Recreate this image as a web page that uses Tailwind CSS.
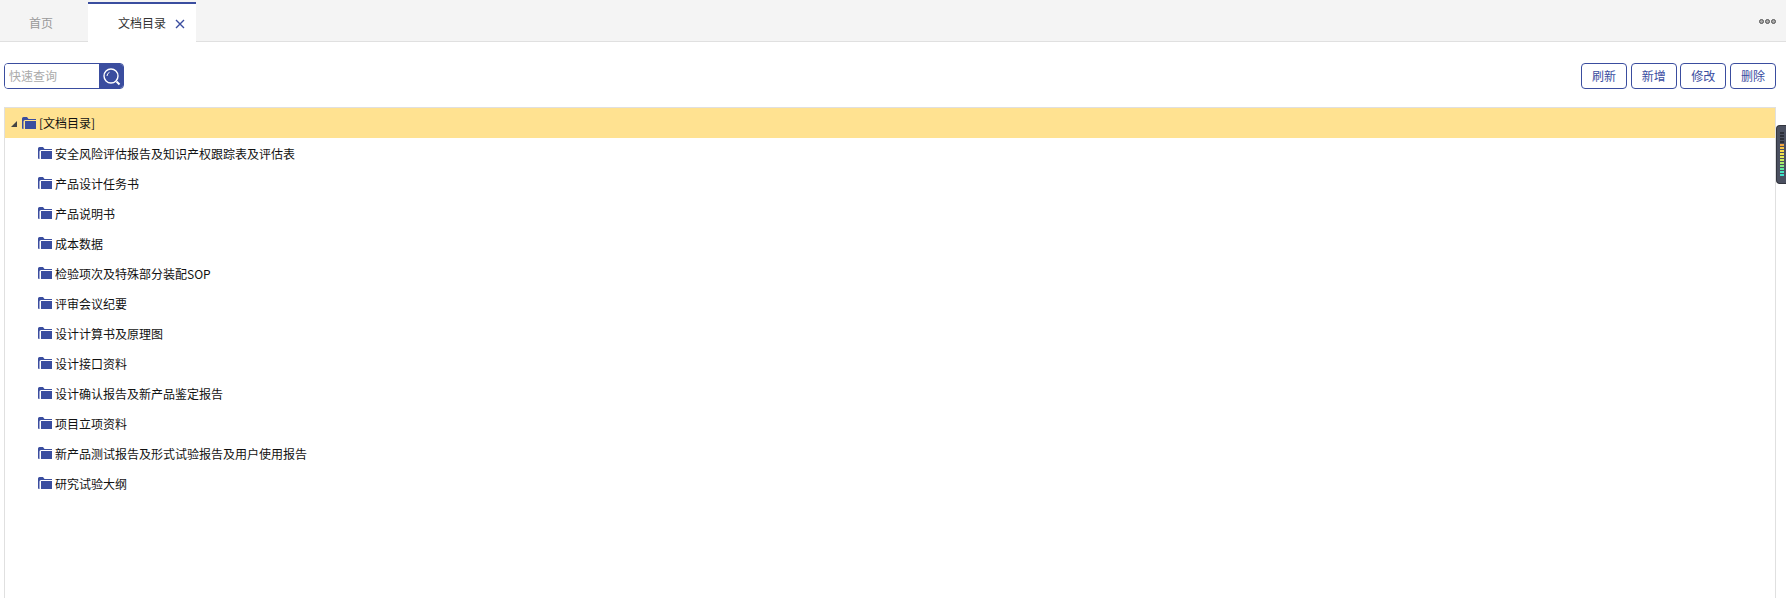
<!DOCTYPE html>
<html lang="zh-CN">
  <head>
    <meta charset="UTF-8" />
    <meta name="viewport" content="width=device-width, initial-scale=1.0" />
    <script src="https://cdn.jsdelivr.net/npm/@tailwindcss/browser@4"></script>
    <title>文档目录</title>
  </head>
  <body class="relative h-[598px] overflow-hidden bg-white font-['Noto_Sans_CJK_SC','Liberation_Sans',sans-serif] text-xs text-[#111]">
    <!-- tabs -->
    <div class="flex h-[42px] items-stretch justify-between border-b border-[#e0e0e0] bg-[#f4f4f4]">
      <div class="flex">
        <div class="flex w-[88px] items-center pl-[29px] pt-[4px] text-[#999]">首页</div>
        <div class="-mb-px mt-[2px] flex w-[108px] items-center border-t-2 border-[#3a4d9f] bg-white pl-[30px] text-[#333]">
          文档目录
          <svg class="ml-[9px] mt-[2px]" width="10" height="10" viewBox="0 0 10 10" fill="none" stroke="#3a4d9f" stroke-width="1.4"><path d="M1 1l8 8M9 1l-8 8" /></svg>
        </div>
      </div>
      <div class="flex items-center gap-[1px] pr-[10px] pt-[1px]">
        <span class="size-[5px] rounded-full border border-[#555] bg-[#aaa]"></span>
        <span class="size-[5px] rounded-full border border-[#555] bg-[#aaa]"></span>
        <span class="size-[5px] rounded-full border border-[#555] bg-[#aaa]"></span>
      </div>
    </div>

    <!-- toolbar -->
    <div class="flex items-center justify-between pl-[4px] pr-[10px] pt-[21px]">
      <div class="flex h-[26px] w-[120px] overflow-hidden rounded border border-[#3a4d9f]">
        <input class="w-[94px] bg-white px-[4px] text-xs outline-none placeholder:text-[#aaa]" placeholder="快速查询" />
        <div class="flex flex-1 items-center justify-center bg-[#3a4d9f]">
          <svg width="19" height="19" viewBox="0 0 19 19" fill="none" stroke="#fff"><circle cx="9" cy="9" r="7" stroke-width="1.4" /><path d="M14.500 14.500l3 3" stroke-width="2" /><path d="M5 9a4 4 0 0 1 2.500-3.700" stroke-width="1" /></svg>
        </div>
      </div>
      <div class="flex gap-[3.67px]">
        <button class="h-[26px] w-[46px] rounded border border-[#3a4d9f] text-xs text-[#3a4d9f]">刷新</button>
        <button class="h-[26px] w-[46px] rounded border border-[#3a4d9f] text-xs text-[#3a4d9f]">新增</button>
        <button class="h-[26px] w-[46px] rounded border border-[#3a4d9f] text-xs text-[#3a4d9f]">修改</button>
        <button class="h-[26px] w-[46px] rounded border border-[#3a4d9f] text-xs text-[#3a4d9f]">删除</button>
      </div>
    </div>

    <!-- tree -->
    <div class="ml-[4px] mr-[10px] mt-[18px] h-[491px] border-x border-t border-[#e0e0e0]">
      <div class="flex h-[30px] items-center bg-[#ffe291] pl-[5px]">
        <svg class="mr-[5px]" width="7" height="7" viewBox="0 0 7 7"><path d="M7 1v6H1z" fill="#444" /></svg>
        <svg class="mr-[3px]" width="14" height="12" viewBox="0 0 14 12"><path d="M0 1.5Q0 0 1.500 0H5l1.500 2H14v1H3Q1.500 3 1.500 4.500V12H1Q0 12 0 11z" fill="#3a4d9f" /><path d="M3 4h11v8H3z" fill="#3a4d9f" /></svg>
        <span>[文档目录]</span>
      </div>
      <ul>
        <li class="flex h-[30px] items-center pl-[33px]">
          <svg class="mr-[3px]" width="14" height="12" viewBox="0 0 14 12"><path d="M0 1.5Q0 0 1.500 0H5l1.500 2H14v1H3Q1.500 3 1.500 4.500V12H1Q0 12 0 11z" fill="#3a4d9f" /><path d="M3 4h11v8H3z" fill="#3a4d9f" /></svg>
          <span class="mt-[2px]">安全风险评估报告及知识产权跟踪表及评估表</span>
        </li>
        <li class="flex h-[30px] items-center pl-[33px]">
          <svg class="mr-[3px]" width="14" height="12" viewBox="0 0 14 12"><path d="M0 1.5Q0 0 1.500 0H5l1.500 2H14v1H3Q1.500 3 1.500 4.500V12H1Q0 12 0 11z" fill="#3a4d9f" /><path d="M3 4h11v8H3z" fill="#3a4d9f" /></svg>
          <span class="mt-[2px]">产品设计任务书</span>
        </li>
        <li class="flex h-[30px] items-center pl-[33px]">
          <svg class="mr-[3px]" width="14" height="12" viewBox="0 0 14 12"><path d="M0 1.5Q0 0 1.500 0H5l1.500 2H14v1H3Q1.500 3 1.500 4.500V12H1Q0 12 0 11z" fill="#3a4d9f" /><path d="M3 4h11v8H3z" fill="#3a4d9f" /></svg>
          <span class="mt-[2px]">产品说明书</span>
        </li>
        <li class="flex h-[30px] items-center pl-[33px]">
          <svg class="mr-[3px]" width="14" height="12" viewBox="0 0 14 12"><path d="M0 1.5Q0 0 1.500 0H5l1.500 2H14v1H3Q1.500 3 1.500 4.500V12H1Q0 12 0 11z" fill="#3a4d9f" /><path d="M3 4h11v8H3z" fill="#3a4d9f" /></svg>
          <span class="mt-[2px]">成本数据</span>
        </li>
        <li class="flex h-[30px] items-center pl-[33px]">
          <svg class="mr-[3px]" width="14" height="12" viewBox="0 0 14 12"><path d="M0 1.5Q0 0 1.500 0H5l1.500 2H14v1H3Q1.500 3 1.500 4.500V12H1Q0 12 0 11z" fill="#3a4d9f" /><path d="M3 4h11v8H3z" fill="#3a4d9f" /></svg>
          <span class="mt-[2px]">检验项次及特殊部分装配SOP</span>
        </li>
        <li class="flex h-[30px] items-center pl-[33px]">
          <svg class="mr-[3px]" width="14" height="12" viewBox="0 0 14 12"><path d="M0 1.5Q0 0 1.500 0H5l1.500 2H14v1H3Q1.500 3 1.500 4.500V12H1Q0 12 0 11z" fill="#3a4d9f" /><path d="M3 4h11v8H3z" fill="#3a4d9f" /></svg>
          <span class="mt-[2px]">评审会议纪要</span>
        </li>
        <li class="flex h-[30px] items-center pl-[33px]">
          <svg class="mr-[3px]" width="14" height="12" viewBox="0 0 14 12"><path d="M0 1.5Q0 0 1.500 0H5l1.500 2H14v1H3Q1.500 3 1.500 4.500V12H1Q0 12 0 11z" fill="#3a4d9f" /><path d="M3 4h11v8H3z" fill="#3a4d9f" /></svg>
          <span class="mt-[2px]">设计计算书及原理图</span>
        </li>
        <li class="flex h-[30px] items-center pl-[33px]">
          <svg class="mr-[3px]" width="14" height="12" viewBox="0 0 14 12"><path d="M0 1.5Q0 0 1.500 0H5l1.500 2H14v1H3Q1.500 3 1.500 4.500V12H1Q0 12 0 11z" fill="#3a4d9f" /><path d="M3 4h11v8H3z" fill="#3a4d9f" /></svg>
          <span class="mt-[2px]">设计接口资料</span>
        </li>
        <li class="flex h-[30px] items-center pl-[33px]">
          <svg class="mr-[3px]" width="14" height="12" viewBox="0 0 14 12"><path d="M0 1.5Q0 0 1.500 0H5l1.500 2H14v1H3Q1.500 3 1.500 4.500V12H1Q0 12 0 11z" fill="#3a4d9f" /><path d="M3 4h11v8H3z" fill="#3a4d9f" /></svg>
          <span class="mt-[2px]">设计确认报告及新产品鉴定报告</span>
        </li>
        <li class="flex h-[30px] items-center pl-[33px]">
          <svg class="mr-[3px]" width="14" height="12" viewBox="0 0 14 12"><path d="M0 1.5Q0 0 1.500 0H5l1.500 2H14v1H3Q1.500 3 1.500 4.500V12H1Q0 12 0 11z" fill="#3a4d9f" /><path d="M3 4h11v8H3z" fill="#3a4d9f" /></svg>
          <span class="mt-[2px]">项目立项资料</span>
        </li>
        <li class="flex h-[30px] items-center pl-[33px]">
          <svg class="mr-[3px]" width="14" height="12" viewBox="0 0 14 12"><path d="M0 1.5Q0 0 1.500 0H5l1.500 2H14v1H3Q1.500 3 1.500 4.500V12H1Q0 12 0 11z" fill="#3a4d9f" /><path d="M3 4h11v8H3z" fill="#3a4d9f" /></svg>
          <span class="mt-[2px]">新产品测试报告及形式试验报告及用户使用报告</span>
        </li>
        <li class="flex h-[30px] items-center pl-[33px]">
          <svg class="mr-[3px]" width="14" height="12" viewBox="0 0 14 12"><path d="M0 1.5Q0 0 1.500 0H5l1.500 2H14v1H3Q1.500 3 1.500 4.500V12H1Q0 12 0 11z" fill="#3a4d9f" /><path d="M3 4h11v8H3z" fill="#3a4d9f" /></svg>
          <span class="mt-[2px]">研究试验大纲</span>
        </li>
      </ul>
    </div>

    <!-- floating level widget on the right edge -->
    <div class="absolute right-0 top-[125px] flex h-[59px] w-[10px] flex-col gap-[1px] rounded-l border border-r-0 border-[#33363f] bg-[#4b5060] pl-[3px] pr-[2px] pt-[6px]">
      <span class="h-[2px] bg-[#2c2f38]"></span>
      <span class="h-[2px] bg-[#2c2f38]"></span>
      <span class="h-[2px] bg-[#2c2f38]"></span>
      <span class="h-[2px] bg-[#2c2f38]"></span>
      <span class="h-[2px] bg-[#f5a742]"></span>
      <span class="h-[2px] bg-[#f7c544]"></span>
      <span class="h-[2px] bg-[#f7d94a]"></span>
      <span class="h-[2px] bg-[#f2e24e]"></span>
      <span class="h-[2px] bg-[#e4e956]"></span>
      <span class="h-[2px] bg-[#c9ec5e]"></span>
      <span class="h-[2px] bg-[#a9ec6c]"></span>
      <span class="h-[2px] bg-[#86ea82]"></span>
      <span class="h-[2px] bg-[#5fe8a4]"></span>
      <span class="h-[2px] bg-[#45e6bd]"></span>
      <span class="h-[2px] bg-[#3de3cc]"></span>
    </div>
  </body>
</html>
